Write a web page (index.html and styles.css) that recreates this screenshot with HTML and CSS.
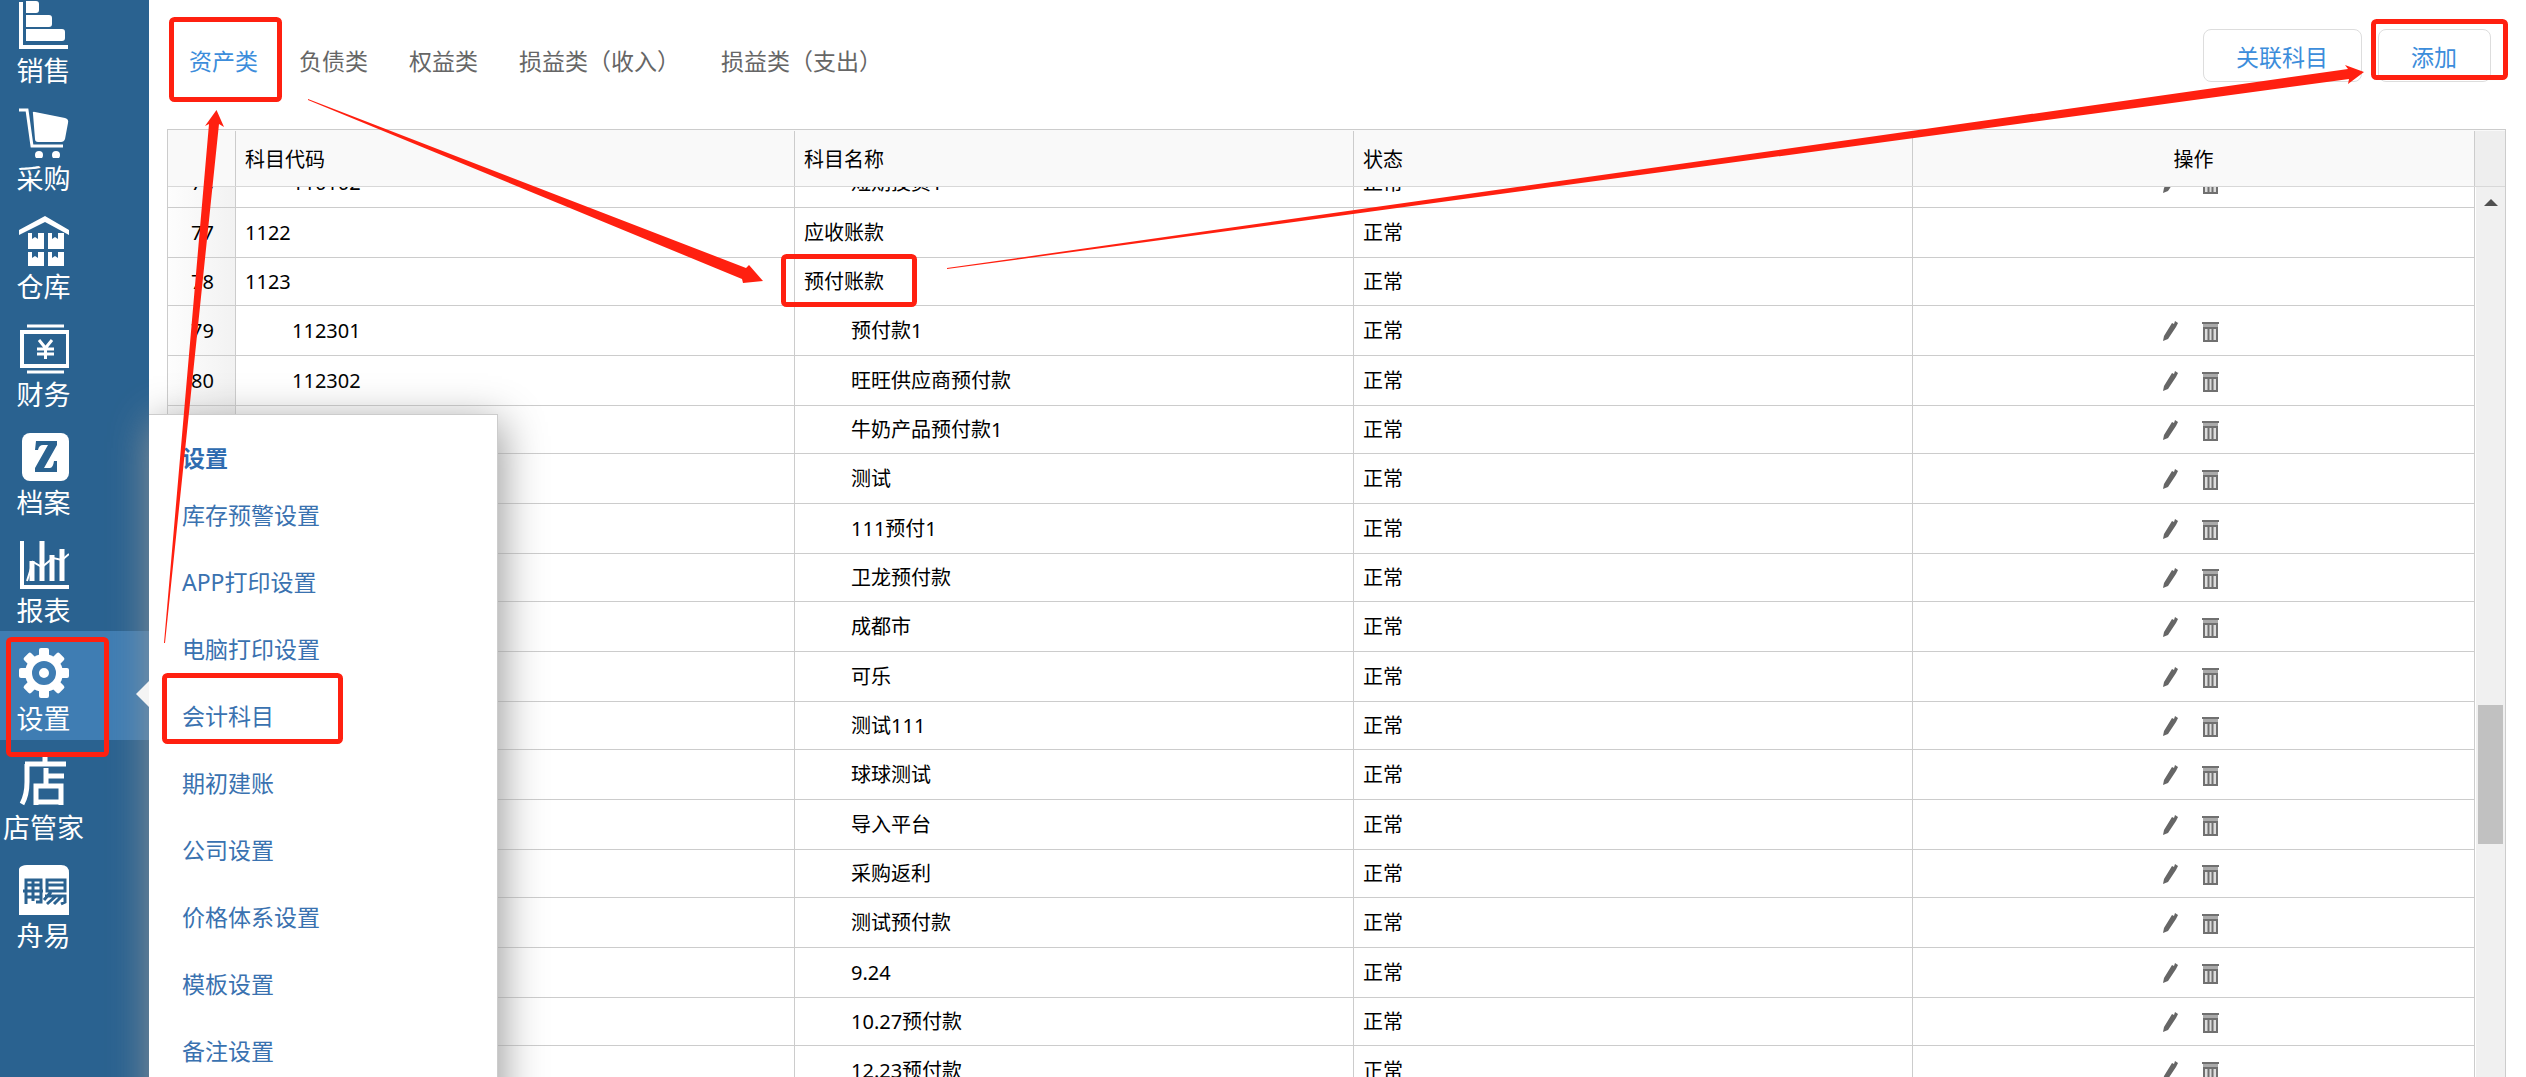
FILE: index.html
```html
<!DOCTYPE html>
<html lang="zh-CN">
<head>
<meta charset="utf-8">
<title>会计科目</title>
<link rel="stylesheet" href="styles.css">
</head>
<body>
<div class="app">
  <nav class="sidebar" aria-label="主菜单">
    <ul class="menu">
      <li><a class="menu-item" href="#"><svg class="menu-icon" viewBox="0 0 50 50"><path d="M2 2V47H49" fill="none" stroke="#fff" stroke-width="4"/><path d="M7 1H17q3 0 3 3v6q0 3-3 3H7zM7 15H30q3 0 3 3v6q0 3-3 3H7zM7 29H43q3 0 3 3v6q0 3-3 3H7z" fill="#fff"/></svg><span>销售</span></a></li>
      <li><a class="menu-item" href="#"><svg class="menu-icon" viewBox="0 0 50 50"><path d="M-1 2H8L13 38H44" fill="none" stroke="#fff" stroke-width="3"/><path d="M14 6Q13 3 16 4L46 10Q50 11 49 15L46 31Q45 34 42 34H19Q16 34 16 31z" fill="#fff"/><circle cx="20" cy="47" r="4" fill="#fff"/><circle cx="37" cy="47" r="4" fill="#fff"/></svg><span>采购</span></a></li>
      <li><a class="menu-item" href="#"><svg class="menu-icon" viewBox="0 0 50 50"><path d="M0 14L26 0L50 14V19L26 6L0 19z" fill="#fff"/><path d="M9 17h4v6l3-2 3 2v-6h6v16H9zM29 17h4v6l3-2 3 2v-6h6v16H29zM9 36h4v6l3-2 3 2v-6h6v17H9zM29 36h4v6l3-2 3 2v-6h6v17H29z" fill="#fff"/></svg><span>仓库</span></a></li>
      <li><a class="menu-item" href="#"><svg class="menu-icon" viewBox="0 0 50 50"><path d="M8 2H45M8 48H45" stroke="#fff" stroke-width="3"/><rect x="3" y="8" width="46" height="34" fill="none" stroke="#fff" stroke-width="4"/><path d="M20 16L26.500 24L33 16M18 25H35M18 30H35M26.500 24V35" fill="none" stroke="#fff" stroke-width="3"/></svg><span>财务</span></a></li>
      <li><a class="menu-item" href="#"><svg class="menu-icon" viewBox="0 0 50 50"><rect x="3" y="1" width="47" height="48" rx="8" fill="#fff"/><path d="M17 9H38V13L25 36H31Q34 36 35 29H38V40H16V36L29 13H24Q20 13 19 18H16z" fill="#2a6290"/></svg><span>档案</span></a></li>
      <li><a class="menu-item" href="#"><svg class="menu-icon" viewBox="0 0 50 50"><path d="M3 1V47H50" fill="none" stroke="#fff" stroke-width="4"/><path d="M13 41V21M23 41V1M33 41V15M43 41V9" stroke="#fff" stroke-width="5"/><path d="M8 41L14 22L23 27L34 18L43 20L50 14" fill="none" stroke="#fff" stroke-width="2"/></svg><span>报表</span></a></li>
      <li><a class="menu-item active" href="#" aria-current="page"><svg class="menu-icon" viewBox="0 0 50 50"><g fill="#fff"><circle cx="25" cy="25" r="19"/><g id="teeth"><rect x="20" y="0" width="10" height="50" rx="2"/><rect x="0" y="20" width="50" height="10" rx="2"/></g><use href="#teeth" transform="rotate(45 25 25)"/></g><circle cx="25" cy="25" r="8.500" fill="none" stroke="#3f7db3" stroke-width="7"/></svg><span>设置</span></a></li>
      <li><a class="menu-item" href="#"><svg class="menu-icon" viewBox="0 0 50 50"><path d="M26 0V7M6 7H47M8 7V25Q8 38 3 47M27 11V29M27 19H45M17 29H42V45H17zM17 45V48M42 45V48" fill="none" stroke="#fff" stroke-width="5"/></svg><span>店管家</span></a></li>
      <li><a class="menu-item" href="#"><svg class="menu-icon" viewBox="0 0 50 50"><path d="M8 0H42Q50 0 50 8V50H-1V8Q-1 0 8 0z" fill="#fff"/><g fill="none" stroke="#2a6290" stroke-width="3"><path d="M7 39V15H22V37H17M4 26H24M7 20H22M7 32H22M14 15V36M28 15H46V26H28zM28 20H46M26 31H46V37L42 39M32 27L25 35M37 31L28 39M43 31L35 39"/></g></svg><span>舟易</span></a></li>
    </ul>
  </nav>

  <main class="content">
    <header class="toolbar">
      <nav class="tabs" aria-label="科目类别">
        <a class="tab current" href="#">资产类</a>
        <a class="tab" href="#">负债类</a>
        <a class="tab" href="#">权益类</a>
        <a class="tab" href="#">损益类（收入）</a>
        <a class="tab" href="#">损益类（支出）</a>
      </nav>
      <div class="actions">
        <button class="btn" type="button">关联科目</button>
        <button class="btn" type="button">添加</button>
      </div>
    </header>

    <section class="grid">
      <div class="grid-head">
        <table class="cols">
          <colgroup><col class="c-num"><col class="c-data"><col class="c-data"><col class="c-data"><col></colgroup>
          <thead><tr><th></th><th>科目代码</th><th>科目名称</th><th>状态</th><th class="ops">操作</th></tr></thead>
        </table>
        <div class="gutter"></div>
      </div>
      <div class="grid-body">
        <div class="viewport">
          <table class="cols rows">
            <colgroup><col class="c-num"><col class="c-data"><col class="c-data"><col class="c-data"><col></colgroup>
            <tbody id="rows"></tbody>
          </table>
        </div>
        <div class="scrollbar"><span class="scroll-up"></span><span class="scroll-thumb"></span></div>
      </div>
    </section>
  </main>

  <aside class="flyout">
    <h2>设置</h2>
    <a href="#">库存预警设置</a>
    <a href="#">APP打印设置</a>
    <a href="#">电脑打印设置</a>
    <a href="#">会计科目</a>
    <a href="#">期初建账</a>
    <a href="#">公司设置</a>
    <a href="#">价格体系设置</a>
    <a href="#">模板设置</a>
    <a href="#">备注设置</a>
  </aside>

  <svg class="marks" width="2526" height="1077" viewBox="0 0 2526 1077" aria-hidden="true">
    <g fill="none" stroke="#ff2010" stroke-width="5">
      <rect x="171.500" y="19.500" width="108" height="80" rx="3"/>
      <rect x="783.500" y="256.500" width="131" height="48" rx="3"/>
      <rect x="2373.500" y="21.500" width="132" height="56" rx="3"/>
      <rect x="8.500" y="639.500" width="98" height="115" rx="3"/>
      <rect x="164.500" y="675.500" width="176" height="66" rx="3"/>
    </g>
    <g fill="#ff2010">
      <path d="M164 643L209 124L205 126L216.500 110L224 127L219 124L165 643z"/>
      <path d="M308 99L746 268L749 265L763 281L743 283L742 279L308 100z"/>
      <path d="M947 268L2348 69L2345 65L2364 72L2348 84L2349 79L947 269z"/>
    </g>
  </svg>
</div>
<script src="rows.js"></script>
</body>
</html>
```
FILE: styles.css
```css
* { box-sizing: border-box; }

body {
  margin: 0;
  background: #fff;
  font-family: "Noto Sans", "Noto Sans CJK SC", sans-serif;
  font-size: 20px;
  color: #000;
  overflow: hidden;
}

a { text-decoration: none; }

.app {
  position: relative;
  display: flex;
  height: 100vh;
  overflow: hidden;
}

/* Left menu */
.sidebar {
  flex: 0 0 149px;
  background: #2a6290;
}
.menu {
  margin: -17px 0 0;
  padding: 0;
  list-style: none;
}
.menu-item {
  display: flex;
  flex-direction: column;
  align-items: center;
  padding: 17px 62px 0 0;
  height: 108px;
  color: #fff;
  font-size: 27px;
  line-height: 41px;
  white-space: nowrap;
}
.menu-item.active { height: 109px; background: #3f7db3; }
.menu-icon { width: 50px; height: 50px; flex: none; }

/* Tabs and buttons */
.content {
  flex: 1;
  min-width: 0;
  display: flex;
  flex-direction: column;
  padding: 0 20px 0 18px;
}
.toolbar {
  display: flex;
  justify-content: space-between;
  align-items: flex-start;
  height: 129px;
  padding: 29px 15px 0 22px;
}
.tabs { display: flex; gap: 41px; padding-top: 14px; }
.tab { color: #666; font-size: 23px; line-height: 36px; }
.tab.current { color: #3c8ddb; }
.actions { display: flex; gap: 16px; }
.btn {
  height: 53px;
  padding: 0 33px 0 32px;
  border: 1px solid #ddd;
  border-radius: 8px;
  background: #fff;
  color: #3c8ddb;
  font: inherit;
  font-size: 23px;
}

/* Data grid */
.grid {
  flex: 1;
  min-height: 0;
  display: flex;
  flex-direction: column;
  border: 1px solid #ccc;
  border-bottom: 0;
}
.grid-head {
  display: flex;
  height: 57px;
  padding-top: 1px;
  border-bottom: 1px solid #d8d8d8;
  background: #f9f9f9;
}
.grid-body { flex: 1; min-height: 0; display: flex; }
.viewport { flex: 1; min-width: 0; overflow: hidden; }
.cols {
  flex: 1;
  width: 100%;
  table-layout: fixed;
  border-collapse: separate;
  border-spacing: 0;
}
.c-num { width: 68px; }
.c-data { width: 559px; }
.cols th, .cols td {
  padding: 0 9px;
  border-right: 1px solid #ccc;
  text-align: left;
  font-weight: 400;
  line-height: 30px;
  white-space: nowrap;
}
.cols th { padding-top: 2px; }
.cols th.ops, .cols td.ops { text-align: center; }
.cols td.ops { padding-right: 15px; }
.rows { margin-top: -29px; }
.rows td { height: 50px; border-bottom: 1px solid #ccc; }
.rows tr:nth-child(3n) td { height: 48px; }
.rows td:first-child {
  padding-left: 11px;
  text-align: center;
  background: linear-gradient(to right, #fdfdfd, #f2f2f2);
}
.rows .child { padding-left: 56px; }
.icon-btn {
  padding: 0;
  border: 0;
  background: none;
  vertical-align: middle;
}
.icon-btn + .icon-btn { margin-left: 22px; }
.icon-btn svg { display: block; width: 18px; height: 22px; }

.gutter {
  flex: 0 0 30px;
  background: #eee;
}
.scrollbar {
  flex: 0 0 30px;
  display: flex;
  flex-direction: column;
  align-items: center;
  padding-top: 12px;
  background: #f0f0f0;
  border-left: 1px solid #fff;
}
.scroll-up {
  border: 7px solid transparent;
  border-top: 0;
  border-bottom-color: #505050;
}
.scroll-thumb {
  width: 25px;
  height: 139px;
  margin-top: 499px;
  background: #c1c1c1;
}

/* Settings flyout */
.flyout {
  position: absolute;
  top: 414px;
  bottom: -40px;
  left: 149px;
  width: 349px;
  padding: 23px 33px;
  border: 1px solid #ccc;
  border-left: 0;
  background: #fff;
  box-shadow: 4px 8px 40px #999;
  font-size: 23px;
}
.flyout::before {
  content: "";
  position: absolute;
  top: 266px;
  left: -13px;
  border: 13px solid transparent;
  border-left: 0;
  border-right-color: #f4f4f4;
}
.flyout h2 {
  margin: 0;
  font-size: 23px;
  line-height: 40px;
  color: #2f6cb0;
}
.flyout a {
  display: block;
  margin-bottom: 27px;
  line-height: 40px;
  color: #3a72b0;
}
.flyout h2 + a { margin-top: 17px; }

/* Highlight frames and arrows over the page */
.marks {
  position: absolute;
  top: 0;
  left: 0;
  pointer-events: none;
}
```
FILE: rows.js
```js
const accounts = [
  ["76", "110102", "短期投资1", true],
  ["77", "1122", "应收账款", false],
  ["78", "1123", "预付账款", false],
  ["79", "112301", "预付款1", true],
  ["80", "112302", "旺旺供应商预付款", true],
  ["", "", "牛奶产品预付款1", true],
  ["", "", "测试", true],
  ["", "", "111预付1", true],
  ["", "", "卫龙预付款", true],
  ["", "", "成都市", true],
  ["", "", "可乐", true],
  ["", "", "测试111", true],
  ["", "", "球球测试", true],
  ["", "", "导入平台", true],
  ["", "", "采购返利", true],
  ["", "", "测试预付款", true],
  ["", "", "9.24", true],
  ["", "", "10.27预付款", true],
  ["", "", "12.23预付款", true]
];

const pencil = '<svg viewBox="0 0 18 22"><path d="M1 20L2 15L10 2L12 3L13 0L16 2L14 6L6 18z" fill="#666"/></svg>';
const bin = '<svg viewBox="0 0 18 22"><path d="M0 1H17V3H0z" fill="#707070"/><path d="M1 3H16V6H1z" fill="#aaa"/><path d="M2 7H15V20H2zM6.500 7V20M10.500 7V20" fill="#ddd" stroke="#707070" stroke-width="2"/></svg>';

document.getElementById("rows").innerHTML = accounts.map(([no, code, name, child]) => {
  const cls = child ? ' class="child"' : "";
  const ops = child
    ? `<button class="icon-btn" type="button" aria-label="编辑">${pencil}</button><button class="icon-btn" type="button" aria-label="删除">${bin}</button>`
    : "";
  return `<tr><td>${no}</td><td${cls}>${code}</td><td${cls}>${name}</td><td>正常</td><td class="ops">${ops}</td></tr>`;
}).join("");
```
